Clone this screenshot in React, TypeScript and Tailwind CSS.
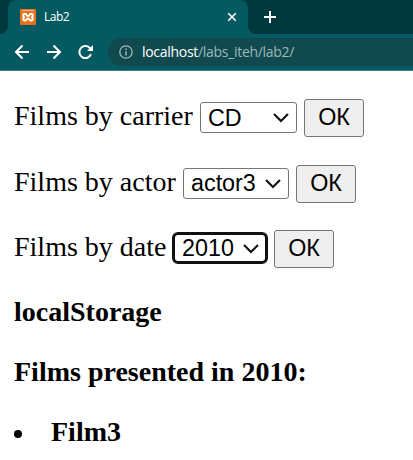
import React from "react";

function Favicon() {
  return (
    <svg width="16" height="16" viewBox="0 0 16 16" className="shrink-0">
      <rect width="16" height="16" rx="1" fill="#e8711c" />
      <rect x="2" y="1" width="12" height="1" fill="#f5b47f" />
      <path
        d="M4.7 4.8C6.8 4.5 6.4 7 8 7C9.6 7 9.2 4.5 11.3 4.8C13.2 5.1 13 7.4 12 8.2C13 9 13.2 11.3 11.3 11.6C9.2 11.9 9.6 9.4 8 9.4C6.4 9.4 6.8 11.9 4.7 11.6C2.8 11.3 3 9 4 8.2C3 7.4 2.8 5.1 4.7 4.8Z"
        fill="none"
        stroke="#fff"
        strokeWidth="2"
      />
    </svg>
  );
}

function BrowserBar() {
  return (
    <header className="h-[71px] border-b border-[#408085] bg-[#045a60] font-['Open_Sans','Noto_Sans',sans-serif]">
      <div className="flex h-[34px] bg-[#00393d]">
        <div className="w-2 bg-[#045a60]">
          <div className="h-full rounded-br-lg bg-[#00393d]" />
        </div>
        <div className="flex w-60 items-center rounded-t-lg bg-[#045a60] pl-3 pr-[11px]">
          <Favicon />
          <span className="ml-2 flex-1 text-[12px] leading-4 tracking-[-0.5px] text-white">Lab2</span>
          <svg width="10" height="10" viewBox="0 0 10 10" stroke="#fff" strokeWidth="1.6">
            <path d="M1.2 1.2L8.8 8.8M8.8 1.2L1.2 8.8" />
          </svg>
        </div>
        <div className="w-2 bg-[#045a60]">
          <div className="h-full rounded-bl-lg bg-[#00393d]" />
        </div>
        <svg width="12" height="12" viewBox="0 0 12 12" stroke="#fff" strokeWidth="2" className="ml-2 mt-[11px]">
          <path d="M0 6H12M6 0V12" />
        </svg>
      </div>
      <div className="mt-1 flex h-[28px]">
        <svg width="108" height="28" viewBox="0 0 108 28" fill="none" stroke="#fff" strokeWidth="2" className="shrink-0">
          <path d="M29 14H16.5M22.5 7.5L16 14L22.5 20.5" />
          <path d="M47 14H59.5M53.5 7.5L60 14L53.5 20.5" />
          <path d="M91 16.2A6 6 0 1 1 89.6 9.8L91.5 11.7" />
          <path d="M93 7V13H87Z" fill="#fff" stroke="none" />
        </svg>
        <div className="flex flex-1 items-center rounded-l-full bg-[#104a4f] pl-[11px]">
          <svg width="14" height="14" viewBox="0 0 14 14" fill="none" stroke="#a2b7b9" strokeWidth="1.3">
            <circle cx="7" cy="7" r="6.2" />
            <path d="M7 6.2V10.4M7 3.6V5" strokeWidth="1.5" />
          </svg>
          <span className="ml-[9px] whitespace-nowrap text-[14px] leading-5 tracking-[-0.3px] text-[#9fb7b9]">
            <span className="text-white">localhost</span>/labs_iteh/lab2/
          </span>
        </div>
      </div>
    </header>
  );
}

type FilterProps = {
  label: string;
  value: string;
  labelClass: string;
  selectClass: string;
};

function Filter({ label, value, labelClass, selectClass }: FilterProps) {
  return (
    <form className="flex h-[38px] items-start" onSubmit={(e) => e.preventDefault()}>
      <label className={`mt-px whitespace-nowrap text-[28px] leading-8 ${labelClass}`}>{label}</label>
      <div className="relative mt-[3px] h-[31px]">
        <select
          defaultValue={value}
          className={`block appearance-none bg-white py-0 font-['Liberation_Sans',sans-serif] text-[23.333px] text-black outline-none ${selectClass}`}
        >
          <option>{value}</option>
        </select>
        <svg
          width="16"
          height="10"
          viewBox="0 0 16 10"
          fill="none"
          stroke="#101010"
          strokeWidth="2.1"
          className="pointer-events-none absolute right-[8px] top-[11px]"
        >
          <path d="M1 1L8 8L15 1" />
        </svg>
      </div>
      <button className="ml-[7px] h-[38px] w-[60px] rounded-[3px] border border-[#767676] bg-[#efefef] pb-0.5 font-['Liberation_Sans',sans-serif] text-[23.333px] leading-7 text-black">
        ОК
      </button>
    </form>
  );
}

export default function App() {
  return (
    <div className="h-[460px] w-[413px] overflow-hidden bg-white font-['Liberation_Serif',serif] text-black">
      <BrowserBar />
      <main className="pl-[14px] pt-[28px]">
        <div className="flex flex-col gap-[27.5px]">
          <Filter label="Films by carrier" value="CD" labelClass="w-[186px]" selectClass="h-[31px] w-[97px] rounded-[3px] border border-[#767676] pl-[7px] leading-7" />
          <Filter label="Films by actor" value="actor3" labelClass="w-[169px]" selectClass="h-[31px] w-[106px] rounded-[3px] border border-[#767676] pl-[7px] leading-7" />
          <Filter label="Films by date" value="2010" labelClass="w-[158px]" selectClass="-mr-px -mt-px h-[32px] w-[96px] rounded-[6px] border-[3px] border-[#101010] pl-[7px] leading-[26px]" />
        </div>
        <div className="mt-[28px] flex flex-col gap-[28px] text-[28px] font-bold leading-8">
          <p>localStorage</p>
          <p>Films presented in 2010:</p>
          <div className="flex items-center">
            <span className="mt-[3px] size-2 rounded-full bg-black" />
            <span className="ml-[29px]">Film3</span>
          </div>
        </div>
      </main>
    </div>
  );
}
